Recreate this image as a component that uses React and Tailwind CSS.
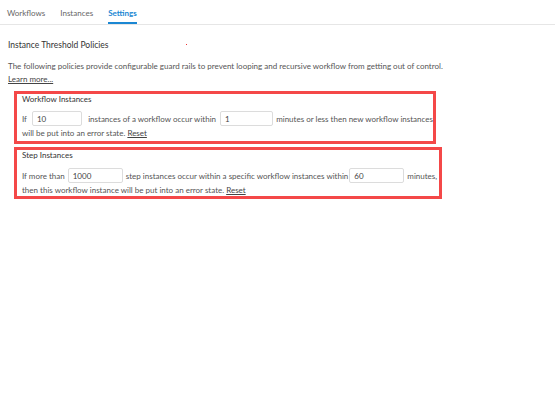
const Field = ({ value, width }) => (
  <div
    className={`flex items-center h-[15px] border border-[#dcdcdc] rounded-[2px] bg-white px-[4px] text-[#444] ${width}`}
  >
    {value}
  </div>
)

export default function App() {
  return (
    <div className="w-[555px] h-[396px] bg-white text-[#555] font-['Lato','Open_Sans',sans-serif] text-[8px] overflow-hidden">
      <div className="flex gap-[15px] px-[7px] h-[25px] border-b border-[#e6e6e6] text-[8px]">
        <div className="pt-[7px] text-[#666]">Workflows</div>
        <div className="pt-[7px] text-[#666]">Instances</div>
        <div className="pt-[7px] text-[#1b87d3] font-bold border-b-2 border-[#1b87d3]">Settings</div>
      </div>

      <div className="px-[8px]">
        <div className="relative mt-[15px] leading-[11px] text-[#333] text-[8.5px]">
          Instance Threshold Policies
          <span className="absolute left-[178px] top-[4px] w-[1px] h-[1px] bg-[#e33]" />
        </div>
        <p className="mt-[9px] leading-[13px] whitespace-nowrap">
          The following policies provide configurable guard rails to prevent looping and recursive workflow from getting out of control.
          <br />
          <span className="underline text-[#444]">Learn more...</span>
        </p>

        <div className="ml-[6px] mt-[5px] w-[422px] border-[3px] border-[#f44848] pl-[5px] pb-[2px] whitespace-nowrap">
          <div className="leading-[11px] text-[#333]">Workflow Instances</div>
          <div className="mt-[6px] flex items-center">
            <span>If</span>
            <Field value="10" width="w-[52px] ml-[5px]" />
            <span className="ml-[6px]">instances of a workflow occur within</span>
            <Field value="1" width="w-[55px] ml-[4px]" />
            <span className="ml-[3px]">minutes or less then new workflow instances</span>
          </div>
          <div className="mt-[2px] leading-[11px]">
            will be put into an error state. <span className="underline text-[#444]">Reset</span>
          </div>
        </div>

        <div className="ml-[6px] mt-[3px] w-[428px] border-[3px] border-[#f44848] pl-[5px] whitespace-nowrap">
          <div className="leading-[11px] text-[#333]">Step Instances</div>
          <div className="mt-[7px] flex items-center">
            <span>If more than</span>
            <Field value="1000" width="w-[55px] ml-[3px]" />
            <span className="ml-[3px]">step instances occur within a specific workflow instances within</span>
            <Field value="60" width="w-[55px] ml-[1px]" />
            <span className="ml-[3px]">minutes,</span>
          </div>
          <div className="mt-[2px] leading-[11px]">
            then this workflow instance will be put into an error state. <span className="underline text-[#444]">Reset</span>
          </div>
        </div>
      </div>
    </div>
  )
}
